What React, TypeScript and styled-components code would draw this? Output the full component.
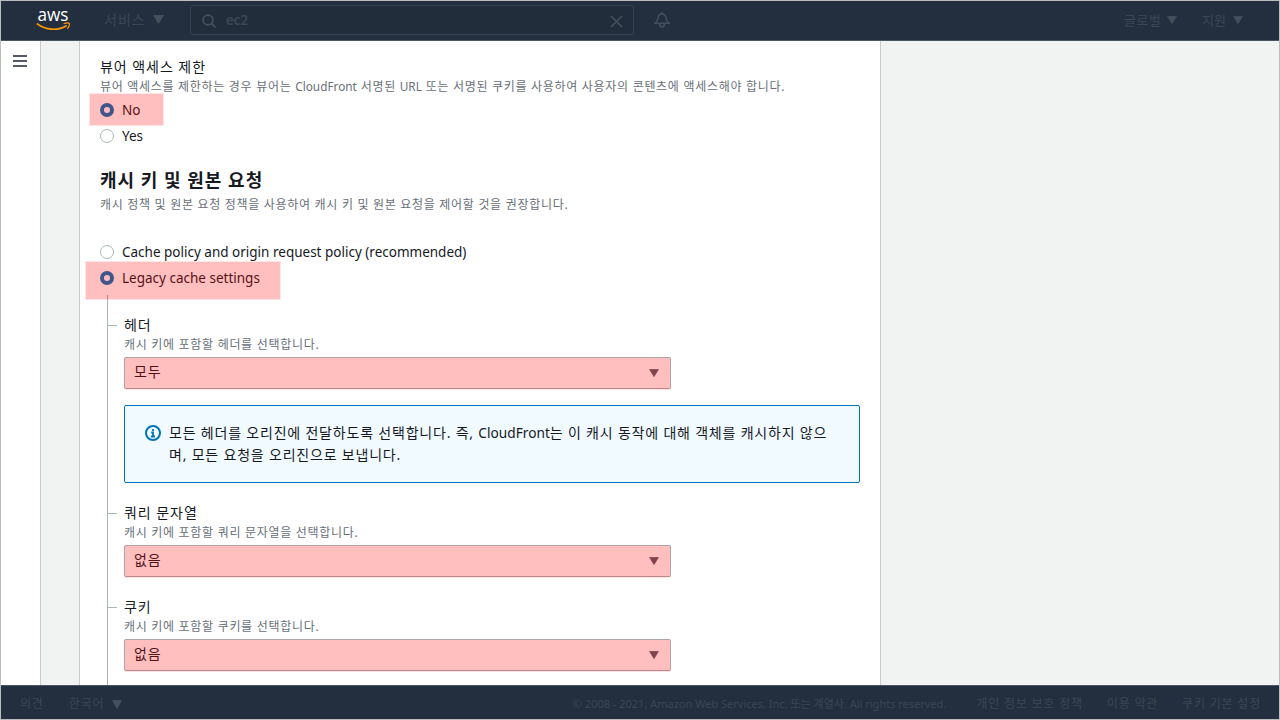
import React from 'react';
import styled, { createGlobalStyle } from 'styled-components';

const GlobalStyle = createGlobalStyle`
  * { box-sizing: border-box; }
  body {
    margin: 0;
    font-family: "Noto Sans", "Noto Sans CJK KR", sans-serif;
    color: #16191f;
    overflow: hidden;
  }
`;

const Frame = styled.div`
  width: 1280px;
  height: 720px;
  display: flex;
  flex-direction: column;
  border: 1px solid #b9bebe;
`;

const Header = styled.header`
  height: 40px;
  flex: none;
  display: flex;
  align-items: center;
  background: #232f3e;
  border-bottom: 1px solid #4d5661;
  color: #3b4653;
  padding: 0 36px 2px 35px;
`;

const Logo = styled.svg`
  width: 35px;
  height: 37px;
  flex: none;
`;

const Label = styled.span<{ $size?: number; $ls?: number }>`
  font-size: ${p => p.$size ?? 14}px;
  letter-spacing: ${p => p.$ls ?? 0}px;
  white-space: nowrap;
`;

const NavItem = styled.div<{ $ml: number; $gap: number }>`
  display: flex;
  align-items: center;
  gap: ${p => p.$gap}px;
  margin-left: ${p => p.$ml}px;
  line-height: 20px;
`;

const Search = styled.div`
  width: 444px;
  height: 30px;
  margin-left: 26px;
  display: flex;
  align-items: center;
  background: #212d3b;
  border: 1px solid #35414f;
  border-radius: 2px;
  padding: 0 10px 0 11px;
  svg { margin-top: 3px; flex: none; }
`;

const Query = styled.span`
  flex: 1;
  margin-left: 10px;
  font-size: 14px;
  font-weight: 600;
  line-height: 20px;
  letter-spacing: -0.3px;
`;

const Bell = styled.svg`
  margin-left: 20px;
  flex: none;
`;

const Spacer = styled.div`
  flex: 1;
`;

const Body = styled.div`
  height: 644px;
  flex: none;
  display: flex;
  background: #f1f3f3;
  overflow: hidden;
`;

const Sidebar = styled.aside`
  width: 40px;
  flex: none;
  background: #fff;
  border-right: 1px solid #c8cccd;
  padding: 14px 0 0 12px;
`;

const Burger = styled.div`
  width: 14px;
  height: 12px;
  display: flex;
  flex-direction: column;
  justify-content: space-between;
  span { height: 2px; background: #545b64; }
`;

const Panel = styled.main`
  width: 802px;
  flex: none;
  margin-left: 38px;
  padding: 15px 20px 0;
  background: #fff;
  border-left: 1px solid #c8cccd;
  border-right: 1px solid #c8cccd;
`;

const FieldLabel = styled.div`
  height: 22px;
  line-height: 22px;
  font-size: 14px;
  letter-spacing: 0.95px;
  white-space: nowrap;
`;

const Hint = styled.div<{ $lh?: number }>`
  height: 16px;
  line-height: ${p => p.$lh ?? 18}px;
  font-size: 12px;
  letter-spacing: 0.7px;
  color: #687078;
  white-space: nowrap;
`;

const Latin = styled.span<{ $size: number }>`
  font-size: ${p => p.$size}px;
  letter-spacing: 0;
`;

const Heading = styled.h2`
  margin: 19px 0 4px;
  height: 24px;
  line-height: 24px;
  font-size: 18px;
  font-weight: 700;
  letter-spacing: 1px;
`;

const RadioGroup = styled.div<{ $mt: number }>`
  margin-top: ${p => p.$mt}px;
`;

const RadioRow = styled.div`
  position: relative;
  height: 26px;
  display: flex;
  align-items: center;
  gap: 8px;
  font-size: 13.5px;
  line-height: 20px;
`;

const Dot = styled.span<{ $on?: boolean }>`
  width: 14px;
  height: 14px;
  flex: none;
  border-radius: 50%;
  background: #fff;
  border: ${p => (p.$on ? '4px solid #0073bb' : '1px solid #aab7b8')};
`;

const Highlight = styled.span<{ $l: number; $t: number; $w: number; $h: number }>`
  position: absolute;
  left: ${p => p.$l}px;
  top: ${p => p.$t}px;
  width: ${p => p.$w}px;
  height: ${p => p.$h}px;
  background: rgba(255, 0, 0, 0.25);
  box-shadow: 0 0 0 1px rgba(255, 0, 0, 0.1);
`;

const Tree = styled.div`
  margin: 4px 0 0 7px;
  height: 400px;
  border-left: 1px solid #aab7b8;
`;

const Branch = styled.section`
  display: flex;
  padding-top: 19px;
`;

const Tick = styled.span`
  width: 9px;
  height: 1px;
  margin: 11px 7px 0 0;
  background: #aab7b8;
`;

const Fields = styled.div`
  width: 736px;
`;

const SelectBox = styled.div`
  position: relative;
  width: 547px;
  height: 32px;
  margin-top: 5px;
  padding: 0 11px 0 9px;
  display: flex;
  align-items: center;
  justify-content: space-between;
  border: 1px solid #aab7b8;
  border-radius: 2px;
  background: #fff;
`;

const SelectValue = styled.span`
  margin-top: -2px;
  font-size: 14px;
  line-height: 20px;
  letter-spacing: 0.9px;
`;

const Alert = styled.div`
  height: 78px;
  margin-top: 16px;
  padding: 16px 20px;
  display: flex;
  gap: 8px;
  border: 1px solid #0073bb;
  border-radius: 2px;
  background: #f1faff;
  svg { margin-top: 3px; flex: none; }
`;

const AlertLine = styled.div`
  height: 22px;
  font-size: 14px;
  line-height: 22px;
  letter-spacing: 0.8px;
  white-space: nowrap;
`;

const Footer = styled.footer`
  height: 34px;
  flex: none;
  display: flex;
  align-items: center;
  background: #232f3e;
  border-top: 1px solid #4d5661;
  color: #3b4653;
  padding: 3px 18px 0 19px;
  line-height: 18px;
`;

const Copyright = styled.span`
  font-size: 11px;
  line-height: 18px;
  margin-bottom: 1px;
  white-space: nowrap;
`;

const Links = styled.div`
  display: flex;
  gap: 24px;
  margin-left: 30px;
`;

const Caret = ({ w = 10, h = 8, color = '#45505c' }: { w?: number; h?: number; color?: string }) => (
  <svg width={w} height={h} viewBox="0 0 10 8" preserveAspectRatio="none">
    <path d="M0.6 0.4h8.8L5 7.6z" fill={color} stroke={color} strokeWidth="0.8" strokeLinejoin="round" />
  </svg>
);

const Radio = ({ label, on, children }: { label: string; on?: boolean; children?: React.ReactNode }) => (
  <RadioRow>
    <Dot $on={on} />
    <span>{label}</span>
    {children}
  </RadioRow>
);

const Field = ({ label, hint, value, children }: { label: string; hint: string; value: string; children?: React.ReactNode }) => (
  <Branch>
    <Tick />
    <Fields>
      <FieldLabel>{label}</FieldLabel>
      <Hint>{hint}</Hint>
      <SelectBox>
        <SelectValue>{value}</SelectValue>
        <Caret color="#545b64" />
        <Highlight $l={0} $t={0} $w={545} $h={31} />
      </SelectBox>
      {children}
    </Fields>
  </Branch>
);

export default function App() {
  return (
    <Frame>
      <GlobalStyle />
      <Header>
        <Logo viewBox="0 0 35 37">
          <text x="1.500" y="19.500" fontFamily="Open Sans" fontSize="18" fontWeight="500" textLength="31" lengthAdjust="spacingAndGlyphs" fill="#fff">aws</text>
          <path d="M1.300 22.900C9.500 29.300 22 29.900 30 25" fill="none" stroke="#f90" strokeWidth="1.700" strokeLinecap="round" />
          <path d="M28 22.500c2.400-.7 4.900-.7 5.300-.1.4.8-.2 3.400-1.700 5" fill="none" stroke="#f90" strokeWidth="1.200" strokeLinecap="round" />
        </Logo>
        <NavItem $ml={33} $gap={7}>
          <Label $ls={1}>서비스</Label>
          <Caret w={11} h={9} />
        </NavItem>
        <Search>
          <svg width="14" height="14" viewBox="0 0 14 14" fill="none" stroke="#45505c" strokeWidth="1.8">
            <circle cx="6" cy="6" r="4.900" />
            <path d="M9.500 9.500l4 4" />
          </svg>
          <Query>ec2</Query>
          <svg width="13" height="13" viewBox="0 0 13 13" stroke="#45505c" strokeWidth="1.700">
            <path d="M1 1l11 11M12 1L1 12" />
          </svg>
        </Search>
        <Bell width="16" height="16" viewBox="0 0 16 16" fill="none" stroke="#45505c" strokeWidth="1.500">
          <path d="M1 11.200h14c-2-1.400-2.700-2.800-3-5.200C11.700 3.300 10.200 2 8 2S4.300 3.300 4 6c-.3 2.400-1 3.800-3 5.200zM8 0v2M5.700 11.500v1.300c0 1.200 1 2.200 2.300 2.200s2.300-1 2.300-2.200v-1.300" />
        </Bell>
        <Spacer />
        <NavItem $ml={0} $gap={6}>
          <Label $size={13} $ls={0.4}>글로벌</Label>
          <Caret w={10} h={8} />
        </NavItem>
        <NavItem $ml={25} $gap={7}>
          <Label $size={13}>지원</Label>
          <Caret w={10} h={8} />
        </NavItem>
      </Header>

      <Body>
        <Sidebar>
          <Burger><span /><span /><span /></Burger>
        </Sidebar>
        <Panel>
          <FieldLabel>뷰어 액세스 제한</FieldLabel>
          <Hint $lh={16}>
            뷰어 액세스를 제한하는 경우 뷰어는 <Latin $size={11.8}>CloudFront</Latin> 서명된 <Latin $size={11.8}>URL</Latin> 또는 서명된 쿠키를 사용하여 사용자의 콘텐츠에 액세스해야 합니다.
          </Hint>
          <RadioGroup $mt={3}>
            <Radio label="No" on>
              <Highlight $l={-10} $t={-3} $w={73} $h={31} />
            </Radio>
            <Radio label="Yes" />
          </RadioGroup>

          <Heading>캐시 키 및 원본 요청</Heading>
          <Hint>캐시 정책 및 원본 요청 정책을 사용하여 캐시 키 및 원본 요청을 제어할 것을 권장합니다.</Hint>

          <RadioGroup $mt={27}>
            <Radio label="Cache policy and origin request policy (recommended)" />
            <Radio label="Legacy cache settings" on>
              <Highlight $l={-14} $t={-3} $w={194} $h={37} />
            </Radio>
          </RadioGroup>

          <Tree>
            <Field label="헤더" hint="캐시 키에 포함할 헤더를 선택합니다." value="모두">
              <Alert>
                <svg width="16" height="16" viewBox="0 0 16 16" fill="none" stroke="#0073bb" strokeWidth="2">
                  <circle cx="8" cy="8" r="7" />
                  <path d="M8 11.500V7.500H6.200M6 11.500h4M8 4v2" strokeWidth="1.800" />
                </svg>
                <div>
                  <AlertLine>
                    모든 헤더를 오리진에 전달하도록 선택합니다. 즉, <Latin $size={13.7}>CloudFront</Latin>는 이 캐시 동작에 대해 객체를 캐시하지 않으
                  </AlertLine>
                  <AlertLine>며, 모든 요청을 오리진으로 보냅니다.</AlertLine>
                </div>
              </Alert>
            </Field>
            <Field label="쿼리 문자열" hint="캐시 키에 포함할 쿼리 문자열을 선택합니다." value="없음" />
            <Field label="쿠키" hint="캐시 키에 포함할 쿠키를 선택합니다." value="없음" />
          </Tree>
        </Panel>
      </Body>

      <Footer>
        <Label $size={12} $ls={0.8}>의견</Label>
        <NavItem $ml={25} $gap={7}>
          <Label $size={12} $ls={0.9}>한국어</Label>
          <Caret w={10} h={9} />
        </NavItem>
        <Spacer />
        <Copyright>© 2008 - 2021, Amazon Web Services, Inc. 또는 계열사. All rights reserved.</Copyright>
        <Links>
          <Label $size={12} $ls={0.8}>개인 정보 보호 정책</Label>
          <Label $size={12} $ls={0.8}>이용 약관</Label>
          <Label $size={12} $ls={0.8}>쿠키 기본 설정</Label>
        </Links>
      </Footer>
    </Frame>
  );
}
